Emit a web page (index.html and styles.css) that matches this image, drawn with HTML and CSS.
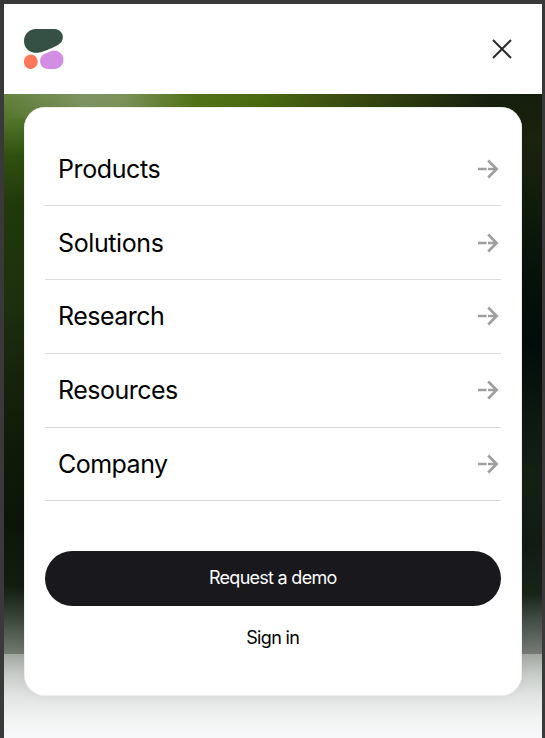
FILE: index.html
```html
<!DOCTYPE html>
<html lang="en">
<head>
<meta charset="utf-8">
<title>Menu</title>
<link rel="stylesheet" href="styles.css">
</head>
<body>
<svg class="symbols" aria-hidden="true">
  <symbol id="arrow" viewBox="0 0 22 20"><path d="M1 10H9.6M11 10H20M11.2 1.5 19.7 10l-8.5 8.5" fill="none" stroke="currentColor" stroke-width="2.6"/></symbol>
</svg>
<div class="page">
  <header class="header">
    <svg class="logo" viewBox="0 0 75 75" preserveAspectRatio="none" aria-label="Logo">
      <path fill="#355146" d="M24.3 44.7c2 0 6-.1 11.6-2.4 6.5-2.7 19.3-7.5 28.6-12.5 6.5-3.5 9.3-8.1 9.3-14.3C73.8 7 66.9 0 58.3 0h-36C10 0 0 10 0 22.3s9.4 22.4 24.3 22.4z"/>
      <path fill="#D18EE2" d="M30.4 60c0-6 3.6-11.5 9.2-13.8l11.3-4.7C62.4 36.8 75 45.2 75 57.6 75 67.2 67.2 75 57.6 75H45.3c-8.2 0-14.9-6.7-14.9-15z"/>
      <path fill="#FF7759" d="M12.9 47.6C5.8 47.6 0 53.4 0 60.5v1.7C0 69.2 5.8 75 12.9 75c7.1 0 12.9-5.8 12.9-12.9v-1.7c-.1-7-5.8-12.8-12.9-12.8z"/>
    </svg>
    <svg class="close" viewBox="0 0 20 20" aria-label="Close"><path d="M1 1 19 19M19 1 1 19" fill="none" stroke="#2b2b2b" stroke-width="2"/></svg>
  </header>
  <main class="hero">
    <div class="card">
      <nav class="menu">
        <a class="item"><span class="products">Products</span><svg class="arrow"><use href="#arrow"/></svg></a>
        <a class="item"><span class="solutions">Solutions</span><svg class="arrow"><use href="#arrow"/></svg></a>
        <a class="item"><span class="research">Research</span><svg class="arrow"><use href="#arrow"/></svg></a>
        <a class="item"><span class="resources">Resources</span><svg class="arrow"><use href="#arrow"/></svg></a>
        <a class="item"><span class="company">Company</span><svg class="arrow"><use href="#arrow"/></svg></a>
      </nav>
      <a class="demo"><span>Request a demo</span></a>
      <a class="signin"><span>Sign in</span></a>
    </div>
  </main>
</div>
</body>
</html>
```
FILE: styles.css
```css
* { box-sizing: border-box; }
body { margin: 0; background: #3a3939; font-family: Inter, "Liberation Sans", sans-serif; color: #000; overflow: hidden; }
.symbols { display: none; }
.page { height: 738px; border: solid #3a3939; border-width: 4px 3px 0 4px; display: flex; flex-direction: column; }
.header { height: 90px; flex: none; background: #fff; display: flex; align-items: center; justify-content: space-between; padding: 0 30.5px 0 20px; }
.logo { width: 39.5px; height: 40px; }
.close { width: 20px; height: 20px; }
.hero {
  flex: 1;
  padding: 12.5px 20.5px 0 20px;
  background:
    linear-gradient(90deg, transparent 0, #7e9362 80px, #7b9159 120px, #527218 190px, #4a6b0f 255px, #3e5012 330px, #28350f 420px, #182010 485px, transparent 520px) 0 0 / 100% 24px no-repeat,
    linear-gradient(#a0a6a0 0, #c7cbc8 20px, #e1e4e2 42px, #f1f3f3 65px, #f7f8f9) 0 560px / 100% 84px no-repeat,
    linear-gradient(#65833e 0, #4f7027 30px, #315010 62px, #22390c 110px, #1c300e 210px, #17240d 280px, #101b09 350px, #0c1508 430px, #121d10 492px, #334033 520px, #747b71 560px) 0 0 / 50% 560px no-repeat,
    linear-gradient(#151d0c 0, #1b230e 45px, #101c0b 110px, #07120a 180px, #020c0a 250px, #0d1811 320px, #142014 380px, #111b13 450px, #192419 500px, #414c42 525px, #757c73 560px) 100% 0 / 50% 560px no-repeat;
}
.card { height: 589px; border-radius: 21px; background: #fff; padding: 26px 21px 0; box-shadow: inset 0 0 0 .5px #dfe2de, 0 2px 12px rgba(0,0,0,.04); }
.item { height: 73.75px; border-bottom: 1px solid #dadadc; display: flex; align-items: center; justify-content: space-between; padding: 0 1.5px 0 13px; font-size: 25px; line-height: 32px; }
.arrow { width: 22px; height: 20px; color: #9e9e9e; }
.item span { letter-spacing: -.4px; }
.item .research, .item .company { letter-spacing: -.52px; }
.item .resources { letter-spacing: -.5px; }
.demo { margin-top: 50px; height: 55px; border-radius: 28px; background: #19181d; color: #fff; display: flex; align-items: center; justify-content: center; font-size: 18px; letter-spacing: -.72px; padding-bottom: 3px; }
.signin { margin-top: 20px; height: 22px; display: flex; align-items: center; justify-content: center; font-size: 18px; letter-spacing: -.65px; }
```
